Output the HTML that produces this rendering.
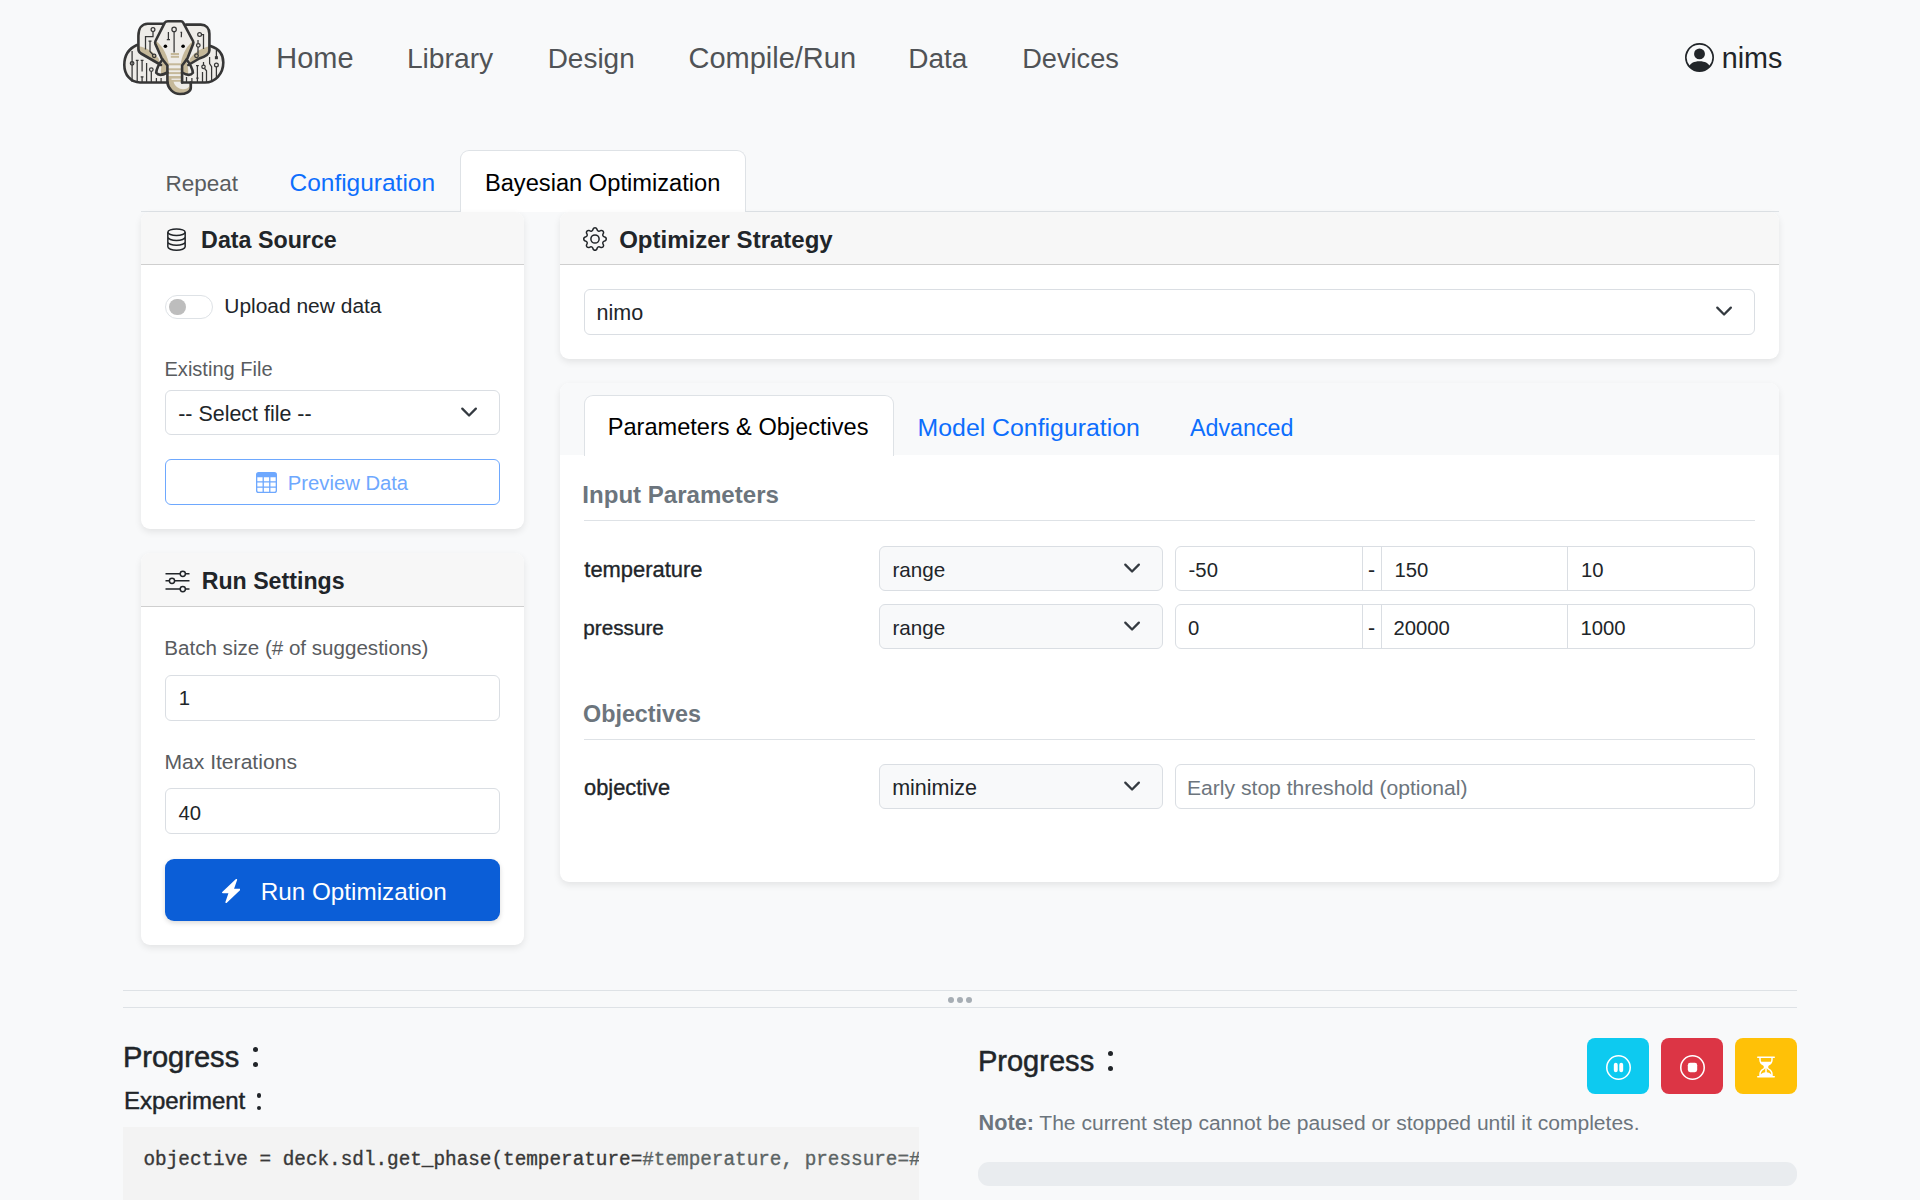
<!DOCTYPE html>
<html><head><meta charset="utf-8"><title>Bayesian Optimization</title>
<style>
*{box-sizing:border-box;margin:0;padding:0}
html,body{width:1920px;height:1200px;overflow:hidden;background:#f8f9fa;font-family:"Liberation Sans",sans-serif;color:#212529}
.a{position:absolute}
.t{position:absolute;white-space:nowrap;line-height:1}
.card{position:absolute;background:#fff;border-radius:9px;box-shadow:0 3px 7px rgba(0,0,0,.085)}
.chd{position:absolute;left:0;right:0;top:0;background:#f7f7f7;border-bottom:1.6px solid #cfcfcf;border-radius:9px 9px 0 0}
.fc{position:absolute;background:#fff;border:1.2px solid #dadee3;border-radius:6px}
.dot{position:absolute;width:5px;height:5px;border-radius:50%;background:#212529}
</style></head><body>

<svg class="a" style="left:115px;top:10px" width="120" height="90" viewBox="115 10 120 90">
 <g fill="#eeece8">
  <path d="M136.9 45C128 49 124.3 56 124.3 64.9C124.3 75 131 82.5 140 82.5H167.4V60L159 45Z"/>
  <path d="M210.5 46.1C218 48.5 223.3 54 223.3 62.5C223.3 74 215 82.5 205 82.5H182V60L190 45Z"/>
  <path d="M163.5 23.8H147.7C142 23.8 138.4 28.5 138.4 36V49C138.4 51.5 139.5 52.5 141 53.5L161 65L165 40Z"/>
  <path d="M186.1 24.6H200.8C206 24.6 209.4 28 209.4 33.8V50.6C209.4 54 206 56.5 199.3 58.5L188 65L184 40Z"/>
  <path d="M166.5 21.2H182.4L193.5 42.5L187.2 58.5L182.1 65.5V82.5H190.8V88C190.8 91.5 186 94 180 94C173 94 168 88 167.4 82.5V65.5L161.8 58.5L155 42.5Z"/>
  <path d="M162.5 59.5C159 64 156.5 69 156.2 72.8C158 75.2 162 75.5 167.4 72.5V65Z"/>
  <path d="M186.6 59.5C190 64 192.6 69 192.9 72.8C191 75.2 187 75.5 182.1 72.5V65Z"/>
 </g>
 <g fill="#c5b899">
  <path d="M138.4 46.3C146.5 47.5 153 51.5 158.5 58.5L160.5 64.5L141 53.5L138.4 51Z"/>
  <path d="M209.4 46.3C201.5 48 195 52 190 58.5L188.5 64.5L199.3 58.5L209.4 51Z"/>
  <path d="M156.5 41.5C161.5 45.5 166 52 168.5 62V66.5L161.8 58.5L155 43Z"/>
  <path d="M192.6 41.5C187.6 45.5 183 52 181 62V66.5L187.4 58.5L194 43Z"/>
  <path d="M163 60C161.5 64 160.5 69 161 74.3C163.5 74.8 165.5 74 167.4 72.5V66Z"/>
  <path d="M186.1 60C187.6 64 188.6 69 188.1 74.3C185.6 74.8 183.6 74 182.1 72.5V66Z"/>
  <rect x="170.8" y="53" width="8.2" height="2"/><rect x="170.8" y="55.8" width="8.2" height="2"/>
  <rect x="167.4" y="63.3" width="14.7" height="2"/><rect x="167.4" y="68.3" width="14.7" height="2"/>
  <rect x="167.4" y="72.1" width="14.7" height="2"/>
  <path d="M167.4 76H182.1V82.5H190.8V88C190.8 91.5 186 94 180 94C173 94 168 88 167.4 82.5Z"/>
 </g>
 <g fill="#eeece8">
  <rect x="171.5" y="78.6" width="10.6" height="1.3"/>
  <path d="M173.5 81.8C175 86.5 179 89.3 183 89.3C186 89.3 188.5 88 189.5 86V81.8Z"/>
 </g>
 <g stroke="#363636" stroke-width="1.25" fill="none">
  <path d="M145.5 49.5V36.5H153V31.5M148.5 41.2H151.5M150 41.2V51.5L153.2 55"/>
  <circle cx="153" cy="29.6" r="1.9"/><circle cx="154.2" cy="55.8" r="1.7"/>
  <path d="M174.1 31.6V52.5M168.4 32V39.5M166.8 39.5H170M180.5 32.3H181.5L181.3 37.3"/>
  <circle cx="174.1" cy="29.4" r="2.2"/>
  <circle cx="199.6" cy="34.5" r="1.9"/><path d="M201.5 34.5H203.5V49M198 40V43.5M198 47.1V53.8"/>
  <circle cx="198.3" cy="45.3" r="1.8"/><circle cx="196.5" cy="55.7" r="1.8"/>
  <path d="M132.1 51V82M137.2 60.4V82M135.8 60.4H138.6M142.1 60.4V71.5M140.7 60.4H143.5M142.1 76.8V82M140.7 76.8H143.5M146.6 63V82M151.3 71.5V82M156.4 78V82M161.1 78V82"/>
  <circle cx="132.1" cy="63.3" r="1.8"/><circle cx="151.3" cy="69.6" r="1.8"/>
  <path d="M186.5 77V82M191.9 78V82M197.4 65.7V82M196 65.7H198.8M196.2 78H198.6M203.5 62V65M204.6 68.5L206.5 70.8V82M202.5 72V82M209.6 57V63.6L211.6 66.7V82M216.4 50V57.5M216.4 66.8V77"/>
  <circle cx="203.5" cy="66.8" r="1.7"/><circle cx="216.4" cy="64.9" r="1.9"/>
 </g>
 <rect x="214.9" y="56.2" width="3" height="3" fill="#363636"/>
 <circle cx="165.4" cy="46.3" r="1.8" fill="#000"/><circle cx="183.1" cy="46.3" r="1.8" fill="#000"/>
 <g stroke="#363636" stroke-width="2.6" fill="none" stroke-linejoin="round" stroke-linecap="round">
  <path d="M136.9 45C128 49 124.3 56 124.3 64.9C124.3 75 131 82.5 140 82.5H167.4"/>
  <path d="M210.5 46.1C218 48.5 223.3 54 223.3 62.5C223.3 74 215 82.5 205 82.5H182.1"/>
  <path d="M163.5 23.8H147.7C142 23.8 138.4 28.5 138.4 36V49C138.4 51.5 139.5 52.5 141 53.5L161 65"/>
  <path d="M186.1 24.6H200.8C206 24.6 209.4 28 209.4 33.8V50.6C209.4 54 206 56.5 199.3 58.5L188.3 65"/>
  <path d="M168 21.2H181C182 21.2 182.6 21.5 183.2 22.6L193 41C193.5 42 193.5 43 193.1 44L187.4 58.5L182.1 65.5V82.5M167.4 82.5V65.5L161.8 58.5L155.4 44C155 43 155 42 155.5 41L164.8 22.6C165.4 21.5 166 21.2 168 21.2"/>
  <path d="M167.4 82.5C168 88 173 94 180 94C186 94 190.8 91.5 190.8 88V82.5"/>
  <path d="M162.5 59.5C159 64 156.5 69 156.2 72.8C158 75.2 162 75.5 167.4 72.5"/>
  <path d="M186.6 59.5C190 64 192.6 69 192.9 72.8C191 75.2 187 75.5 182.1 72.5"/>
 </g>
</svg>

<div class="t" style="left:276.3px;top:44px;font-size:28.94px;color:#505356;">Home</div>
<div class="t" style="left:406.9px;top:44px;font-size:28.24px;color:#505356;">Library</div>
<div class="t" style="left:547.7px;top:45px;font-size:27.96px;color:#505356;">Design</div>
<div class="t" style="left:688.5px;top:44px;font-size:28.99px;color:#505356;">Compile/Run</div>
<div class="t" style="left:908.3px;top:45px;font-size:27.99px;color:#505356;">Data</div>
<div class="t" style="left:1022.2px;top:45px;font-size:27.18px;color:#505356;">Devices</div>
<svg class="a" style="left:1685px;top:43px" width="29" height="29" viewBox="0 0 16 16" fill="#212529"><path d="M11 6a3 3 0 1 1-6 0 3 3 0 0 1 6 0"/><path fill-rule="evenodd" d="M0 8a8 8 0 1 1 16 0A8 8 0 0 1 0 8m8-7a7 7 0 0 0-5.468 11.37C3.242 11.226 4.805 10 8 10s4.757 1.225 5.468 2.37A7 7 0 0 0 8 1"/></svg>
<div class="t" style="left:1721.75px;top:44px;font-size:28.73px;color:#212529;">nims</div>
<div class="a" style="left:141px;top:210.8px;width:1638px;height:1.3999999999999773px;background:#dee2e6"></div>
<div class="a" style="left:460px;top:150px;width:286px;height:62.19999999999999px;background:#fff;border:1.3px solid #dee2e6;border-bottom:none;border-radius:9px 9px 0 0"></div>
<div class="t" style="left:165.5px;top:173px;font-size:22.5px;color:#595c5f;">Repeat</div>
<div class="t" style="left:289.5px;top:171px;font-size:24.47px;color:#0d6efd;">Configuration</div>
<div class="t" style="left:484.9px;top:172px;font-size:23.68px;color:#000;">Bayesian Optimization</div>
<div class="card" style="left:141px;top:212px;width:383px;height:317px"><div class="chd" style="height:53.2px"></div></div>
<svg class="a" style="left:166px;top:228px" width="21" height="23" viewBox="0 0 16 17.5" fill="none" stroke="#212529" stroke-width="1.15"><ellipse cx="8" cy="3.2" rx="6.6" ry="2.5"/><path d="M1.4 3.2V14.3C1.4 15.7 4.4 16.9 8 16.9S14.6 15.7 14.6 14.3V3.2M1.4 6.9C1.4 8.3 4.4 9.5 8 9.5S14.6 8.3 14.6 6.9M1.4 10.6C1.4 12 4.4 13.2 8 13.2S14.6 12 14.6 10.6"/></svg>
<div class="t" style="left:201.1px;top:229px;font-size:23.26px;color:#212529;font-weight:bold;">Data Source</div>
<div class="a" style="left:165px;top:295px;width:48px;height:23.5px;border:1.3px solid #dee2e6;border-radius:12px;background:#fff"></div>
<div class="a" style="left:169px;top:298.5px;width:16.5px;height:16.5px;border-radius:50%;background:#bdbdbd"></div>
<div class="t" style="left:224.25px;top:296px;font-size:20.96px;color:#212529;">Upload new data</div>
<div class="t" style="left:164.5px;top:359px;font-size:20.06px;color:#595c5f;">Existing File</div>
<div class="fc" style="left:165px;top:390px;width:335px;height:45px"></div>
<div class="t" style="left:178.2px;top:404px;font-size:21.45px;color:#212529;">-- Select file --</div>
<svg class="a" style="left:459.94px;top:402.83px" width="18.13" height="18.13" viewBox="0 0 16 16"><path fill="none" stroke="#343a40" stroke-linecap="round" stroke-linejoin="round" stroke-width="2" d="m2 5 6 6 6-6"/></svg>
<div class="a" style="left:165px;top:459px;width:335px;height:46px;border:1.3px solid #6ea8fe;border-radius:6px"></div>
<svg class="a" style="left:255.8px;top:472px" width="21" height="21" viewBox="0 0 16 16" fill="#6ea8fe"><path d="M0 2a2 2 0 0 1 2-2h12a2 2 0 0 1 2 2v12a2 2 0 0 1-2 2H2a2 2 0 0 1-2-2zm15 2h-4v3h4zm0 4h-4v3h4zm0 4h-4v3h3a1 1 0 0 0 1-1zm-5 3v-3H6v3zm-5 0v-3H1v2a1 1 0 0 0 1 1zm-4-4h4V8H1zm0-4h4V4H1zm5-3v3h4V4zm4 4H6v3h4z"/></svg>
<div class="t" style="left:287.8px;top:473px;font-size:20.24px;color:#6ea8fe;">Preview Data</div>
<div class="card" style="left:141px;top:552.6px;width:383px;height:392.2px"><div class="chd" style="height:54.6px"></div></div>
<svg class="a" style="left:164.5px;top:569.5px" width="25" height="23" viewBox="0 0 25 23" fill="none" stroke="#212529" stroke-width="1.5"><path d="M0.5 3.8H15.2M20.3 3.8H24.5M0.5 10.8H4.4M9.5 10.8H24.5M0.5 19.1H15.2M20.3 19.1H24.5"/><circle cx="17.8" cy="3.8" r="2.6"/><circle cx="7" cy="10.8" r="2.6"/><circle cx="17.8" cy="19.1" r="2.6"/></svg>
<div class="t" style="left:201.7px;top:570px;font-size:23.18px;color:#212529;font-weight:bold;">Run Settings</div>
<div class="t" style="left:164.25px;top:638px;font-size:20.59px;color:#595c5f;">Batch size (# of suggestions)</div>
<div class="fc" style="left:165px;top:674.5px;width:335px;height:46px"></div>
<div class="t" style="left:178.7px;top:688px;font-size:20.3px;color:#212529;">1</div>
<div class="t" style="left:164.4px;top:751px;font-size:21.11px;color:#595c5f;">Max Iterations</div>
<div class="fc" style="left:165px;top:788.3px;width:335px;height:46.2px"></div>
<div class="t" style="left:178.4px;top:803px;font-size:20.3px;color:#212529;">40</div>
<div class="a" style="left:165px;top:859px;width:335px;height:62px;background:#0b5ed7;border-radius:9px;box-shadow:0 2px 5px rgba(0,0,0,.15)"></div>
<svg class="a" style="left:221.5px;top:879px" width="18.5" height="24" viewBox="2.5 0 11 16" preserveAspectRatio="none" fill="#fff"><path d="M11.251.068a.5.5 0 0 1 .227.58L9.677 6.5H13a.5.5 0 0 1 .364.843l-8 8.5a.5.5 0 0 1-.842-.49L6.323 9.5H3a.5.5 0 0 1-.364-.843l8-8.5a.5.5 0 0 1 .615-.09z"/></svg>
<div class="t" style="left:260.7px;top:880px;font-size:24.27px;color:#fff;">Run Optimization</div>
<div class="card" style="left:560px;top:212px;width:1219px;height:146.5px"><div class="chd" style="height:53px"></div></div>
<svg class="a" style="left:583px;top:226.8px" width="24" height="24" viewBox="0 0 16 16" fill="#212529"><path d="M8 4.754a3.246 3.246 0 1 0 0 6.492 3.246 3.246 0 0 0 0-6.492M5.754 8a2.246 2.246 0 1 1 4.492 0 2.246 2.246 0 0 1-4.492 0"/><path d="M9.796 1.343c-.527-1.790-3.065-1.790-3.592 0l-.094.319a.873.873 0 0 1-1.255.52l-.292-.16c-1.64-.892-3.433.902-2.540 2.541l.159.292a.873.873 0 0 1-.52 1.255l-.319.094c-1.790.527-1.790 3.065 0 3.592l.319.094a.873.873 0 0 1 .52 1.255l-.16.292c-.892 1.640.901 3.434 2.541 2.540l.292-.159a.873.873 0 0 1 1.255.52l.094.319c.527 1.790 3.065 1.790 3.592 0l.094-.319a.873.873 0 0 1 1.255-.52l.292.16c1.640.893 3.434-.902 2.540-2.541l-.159-.292a.873.873 0 0 1 .52-1.255l.319-.094c1.790-.527 1.790-3.065 0-3.592l-.319-.094a.873.873 0 0 1-.52-1.255l.16-.292c.893-1.640-.902-3.433-2.541-2.540l-.292.159a.873.873 0 0 1-1.255-.52zm-2.633.283c.246-.835 1.428-.835 1.674 0l.094.319a1.873 1.873 0 0 0 2.693 1.115l.291-.16c.764-.415 1.600.42 1.184 1.185l-.159.292a1.873 1.873 0 0 0 1.116 2.692l.318.094c.835.246.835 1.428 0 1.674l-.319.094a1.873 1.873 0 0 0-1.115 2.693l.16.291c.415.764-.42 1.600-1.185 1.184l-.291-.159a1.873 1.873 0 0 0-2.693 1.116l-.094.318c-.246.835-1.428.835-1.674 0l-.094-.319a1.873 1.873 0 0 0-2.692-1.115l-.292.16c-.764.415-1.600-.42-1.184-1.185l.159-.291A1.873 1.873 0 0 0 1.945 8.930l-.319-.094c-.835-.246-.835-1.428 0-1.674l.319-.094A1.873 1.873 0 0 0 3.060 4.377l-.16-.292c-.415-.764.42-1.600 1.185-1.184l.292.159a1.873 1.873 0 0 0 2.692-1.115z"/></svg>
<div class="t" style="left:619.2px;top:228px;font-size:24.03px;color:#212529;font-weight:bold;">Optimizer Strategy</div>
<div class="fc" style="left:584px;top:289.4px;width:1171px;height:45.2px"></div>
<div class="t" style="left:596.6px;top:303px;font-size:21.54px;color:#212529;">nimo</div>
<svg class="a" style="left:1714.94px;top:302.33px" width="18.13" height="18.13" viewBox="0 0 16 16"><path fill="none" stroke="#343a40" stroke-linecap="round" stroke-linejoin="round" stroke-width="2" d="m2 5 6 6 6-6"/></svg>
<div class="card" style="left:560px;top:382.5px;width:1219px;height:499.5px;overflow:hidden"><div class="a" style="left:0;right:0;top:0;height:72.5px;background:#f8f9fa"></div></div>
<div class="a" style="left:584px;top:395.3px;width:310px;height:61.19999999999999px;background:#fff;border:1.3px solid #dee2e6;border-bottom:none;border-radius:9px 9px 0 0"></div>
<div class="t" style="left:607.7px;top:416px;font-size:23.59px;color:#000;">Parameters &amp; Objectives</div>
<div class="t" style="left:917.6px;top:416px;font-size:24.84px;color:#0d6efd;">Model Configuration</div>
<div class="t" style="left:1190px;top:417px;font-size:23.27px;color:#0d6efd;">Advanced</div>
<div class="t" style="left:582.3px;top:483px;font-size:24.07px;color:#6c757d;font-weight:bold;">Input Parameters</div>
<div class="a" style="left:584px;top:519.8px;width:1171px;height:1.400000000000091px;background:#dee2e6"></div>
<div class="t" style="left:584.3px;top:559px;font-size:21.91px;color:#212529;-webkit-text-stroke:0.35px #212529;">temperature</div>
<div class="fc" style="left:879px;top:546.3px;width:284px;height:44.3px;background:#f8f9fa"></div>
<div class="t" style="left:892.4px;top:560px;font-size:20.66px;color:#212529;">range</div>
<svg class="a" style="left:1122.94px;top:558.78px" width="18.13" height="18.13" viewBox="0 0 16 16"><path fill="none" stroke="#343a40" stroke-linecap="round" stroke-linejoin="round" stroke-width="2" d="m2 5 6 6 6-6"/></svg>
<div class="fc" style="left:1175px;top:546.3px;width:580px;height:44.3px"></div>
<div class="a" style="left:1362px;top:546.3px;width:1.2000000000000455px;height:44.30000000000007px;background:#dadee3"></div>
<div class="a" style="left:1381px;top:546.3px;width:1.2000000000000455px;height:44.30000000000007px;background:#dadee3"></div>
<div class="a" style="left:1567px;top:546.3px;width:1.2000000000000455px;height:44.30000000000007px;background:#dadee3"></div>
<div class="t" style="left:1188.6px;top:560px;font-size:20.3px;color:#212529;">-50</div>
<div class="t" style="left:1368px;top:560px;font-size:21.3px;color:#212529;">-</div>
<div class="t" style="left:1394.5px;top:560px;font-size:20.3px;color:#212529;">150</div>
<div class="t" style="left:1581px;top:560px;font-size:20.3px;color:#212529;">10</div>
<div class="t" style="left:583.3px;top:618px;font-size:20.71px;color:#212529;-webkit-text-stroke:0.35px #212529;">pressure</div>
<div class="fc" style="left:879px;top:604.3px;width:284px;height:45.2px;background:#f8f9fa"></div>
<div class="t" style="left:892.4px;top:618px;font-size:20.66px;color:#212529;">range</div>
<svg class="a" style="left:1122.94px;top:617.23px" width="18.13" height="18.13" viewBox="0 0 16 16"><path fill="none" stroke="#343a40" stroke-linecap="round" stroke-linejoin="round" stroke-width="2" d="m2 5 6 6 6-6"/></svg>
<div class="fc" style="left:1175px;top:604.3px;width:580px;height:45.2px"></div>
<div class="a" style="left:1362px;top:604.3px;width:1.2000000000000455px;height:45.200000000000045px;background:#dadee3"></div>
<div class="a" style="left:1381px;top:604.3px;width:1.2000000000000455px;height:45.200000000000045px;background:#dadee3"></div>
<div class="a" style="left:1567px;top:604.3px;width:1.2000000000000455px;height:45.200000000000045px;background:#dadee3"></div>
<div class="t" style="left:1188px;top:618px;font-size:20.3px;color:#212529;">0</div>
<div class="t" style="left:1368px;top:618px;font-size:21.3px;color:#212529;">-</div>
<div class="t" style="left:1393.4px;top:618px;font-size:20.3px;color:#212529;">20000</div>
<div class="t" style="left:1580.4px;top:618px;font-size:20.3px;color:#212529;">1000</div>
<div class="t" style="left:583px;top:703px;font-size:23.33px;color:#6c757d;font-weight:bold;">Objectives</div>
<div class="a" style="left:584px;top:738.8px;width:1171px;height:1.400000000000091px;background:#dee2e6"></div>
<div class="t" style="left:584px;top:777px;font-size:21.84px;color:#212529;-webkit-text-stroke:0.35px #212529;">objective</div>
<div class="fc" style="left:879px;top:764.3px;width:284px;height:45px;background:#f8f9fa"></div>
<div class="t" style="left:892.2px;top:778px;font-size:21.51px;color:#212529;">minimize</div>
<svg class="a" style="left:1122.94px;top:777.13px" width="18.13" height="18.13" viewBox="0 0 16 16"><path fill="none" stroke="#343a40" stroke-linecap="round" stroke-linejoin="round" stroke-width="2" d="m2 5 6 6 6-6"/></svg>
<div class="fc" style="left:1175px;top:764.3px;width:580px;height:45px"></div>
<div class="t" style="left:1187px;top:777px;font-size:21.12px;color:#6c757d;">Early stop threshold (optional)</div>
<div class="a" style="left:123px;top:989.8px;width:1674px;height:1.400000000000091px;background:#dee2e6"></div>
<div class="a" style="left:123px;top:1006.8px;width:1674px;height:1.400000000000091px;background:#dee2e6"></div>
<div class="a" style="left:948px;top:996.5px;width:6px;height:6px;border-radius:50%;background:#a6adb4"></div>
<div class="a" style="left:957px;top:996.5px;width:6px;height:6px;border-radius:50%;background:#a6adb4"></div>
<div class="a" style="left:966px;top:996.5px;width:6px;height:6px;border-radius:50%;background:#a6adb4"></div>
<div class="t" style="left:122.9px;top:1043px;font-size:29.07px;color:#212529;-webkit-text-stroke:0.50px #212529;">Progress</div>
<div class="dot" style="left:252.8px;top:1047px"></div><div class="dot" style="left:252.8px;top:1062px"></div>
<div class="t" style="left:123.9px;top:1089px;font-size:24.0px;color:#212529;-webkit-text-stroke:0.45px #212529;">Experiment</div>
<div class="dot" style="left:256.5px;top:1093px;width:4.5px;height:4.5px"></div><div class="dot" style="left:256.5px;top:1105.5px;width:4.5px;height:4.5px"></div>
<div class="a" style="left:123px;top:1127px;width:795.7px;height:80px;background:#f3f3f3;overflow:hidden"><div class="t" style="left:20.5px;top:24px;font-family:'Liberation Mono',monospace;font-size:19.33px;color:#383838;-webkit-text-stroke:0.35px #383838">objective = deck.sdl.get_phase(temperature=<span style="color:#5b6363;-webkit-text-stroke:0.35px #5b6363">#temperature, pressure=#pressure)</span></div></div>
<div class="t" style="left:977.9px;top:1047px;font-size:29.07px;color:#212529;-webkit-text-stroke:0.50px #212529;">Progress</div>
<div class="dot" style="left:1107.5px;top:1051px"></div><div class="dot" style="left:1107.5px;top:1065.5px"></div>
<div class="a" style="left:1587px;top:1038px;width:62px;height:56px;background:#0dcaf0;border-radius:8px"></div>
<div class="a" style="left:1661px;top:1038px;width:62px;height:56px;background:#dc3545;border-radius:8px"></div>
<div class="a" style="left:1735px;top:1038px;width:62px;height:56px;background:#ffc107;border-radius:8px"></div>
<svg class="a" style="left:1605.5px;top:1054.5px" width="25" height="25" viewBox="0 0 16 16" fill="#fff"><path d="M8 15A7 7 0 1 1 8 1a7 7 0 0 1 0 14m0 1A8 8 0 1 0 8 0a8 8 0 0 0 0 16"/><path d="M5 6.25a1.25 1.25 0 1 1 2.5 0v3.5a1.25 1.25 0 1 1-2.5 0zm3.5 0a1.25 1.25 0 1 1 2.5 0v3.5a1.25 1.25 0 1 1-2.5 0z"/></svg>
<svg class="a" style="left:1679.5px;top:1054.5px" width="25" height="25" viewBox="0 0 16 16" fill="#fff"><path d="M8 15A7 7 0 1 1 8 1a7 7 0 0 1 0 14m0 1A8 8 0 1 0 8 0a8 8 0 0 0 0 16"/><path d="M5 6.5A1.5 1.5 0 0 1 6.5 5h3A1.5 1.5 0 0 1 11 6.5v3A1.5 1.5 0 0 1 9.5 11h-3A1.5 1.5 0 0 1 5 9.5z"/></svg>
<svg class="a" style="left:1754px;top:1054.5px" width="24" height="24" viewBox="0 0 16 16" fill="#fff"><path d="M2.5 15a.5.5 0 1 1 0-1h1v-1a4.5 4.5 0 0 1 2.557-4.06c.29-.139.443-.377.443-.59v-.7c0-.213-.154-.451-.443-.59A4.5 4.5 0 0 1 3.5 3V2h-1a.5.5 0 0 1 0-1h11a.5.5 0 0 1 0 1h-1v1a4.5 4.5 0 0 1-2.557 4.06c-.29.139-.443.377-.443.59v.7c0 .213.154.451.443.59A4.5 4.5 0 0 1 12.5 13v1h1a.5.5 0 0 1 0 1zm2-13v1c0 .537.12 1.045.337 1.5h6.326c.216-.455.337-.963.337-1.5V2zm3 6.35c0 .701-.478 1.236-1.011 1.492A3.500 3.500 0 0 0 4.5 13s.866-1.299 3-1.48zm1 0v3.17c2.134.181 3 1.48 3 1.48a3.5 3.5 0 0 0-1.989-3.158C8.978 9.586 8.5 9.052 8.5 8.351z"/></svg>
<div class="t" style="left:978.6px;top:1112px;font-size:21.66px;color:#6c757d;font-weight:bold;">Note:</div>
<div class="t" style="left:1039.3px;top:1112px;font-size:21.06px;color:#6c757d;">The current step cannot be paused or stopped until it completes.</div>
<div class="a" style="left:978px;top:1162.3px;width:818.5px;height:23.40000000000009px;background:#e9ecef;border-radius:11px"></div>
</body></html>
